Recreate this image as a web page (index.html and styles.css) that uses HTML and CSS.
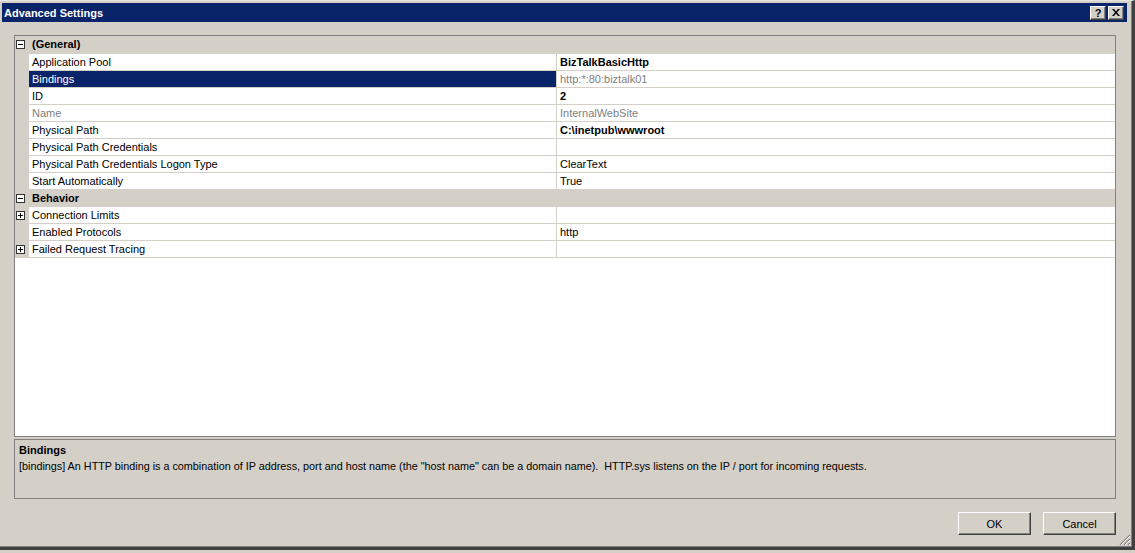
FILE: index.html
```html
<!DOCTYPE html>
<html lang="en">
<head>
  <meta charset="UTF-8">
  <title>Advanced Settings</title>
  <link rel="stylesheet" href="styles.css">
</head>
<body>
  <div class="window">
    <div class="titlebar">
      <span class="title">Advanced Settings</span>
      <div class="caption-buttons">
        <span class="cap-btn">?</span>
        <span class="cap-btn close">
          <svg width="8" height="7" viewBox="0 0 8 7"><path d="M0 0h2l2 2.5 2-2.5h2l-3 3.5 3 3.5h-2l-2-2.5-2 2.5h-2l3-3.5z" fill="#000"/></svg>
        </span>
      </div>
    </div>

    <div class="main">
      <div class="grid">
        <div class="row category first">
          <div class="gutter"><svg class="toggle" width="9" height="9" viewBox="0 0 9 9"><rect x="0.5" y="0.5" width="8" height="8" fill="#fff" stroke="#333"/><path d="M2 4.5h5" stroke="#000"/></svg></div>
          <div class="cat-name">(General)</div>
        </div>
        <div class="row">
          <div class="gutter"></div>
          <div class="name">Application Pool</div>
          <div class="value bold">BizTalkBasicHttp</div>
        </div>
        <div class="row selected">
          <div class="gutter"></div>
          <div class="name">Bindings</div>
          <div class="value muted">http:*:80:biztalk01</div>
        </div>
        <div class="row">
          <div class="gutter"></div>
          <div class="name">ID</div>
          <div class="value bold">2</div>
        </div>
        <div class="row">
          <div class="gutter"></div>
          <div class="name muted">Name</div>
          <div class="value muted">InternalWebSite</div>
        </div>
        <div class="row">
          <div class="gutter"></div>
          <div class="name">Physical Path</div>
          <div class="value bold">C:\inetpub\wwwroot</div>
        </div>
        <div class="row">
          <div class="gutter"></div>
          <div class="name">Physical Path Credentials</div>
          <div class="value"></div>
        </div>
        <div class="row">
          <div class="gutter"></div>
          <div class="name">Physical Path Credentials Logon Type</div>
          <div class="value">ClearText</div>
        </div>
        <div class="row">
          <div class="gutter"></div>
          <div class="name">Start Automatically</div>
          <div class="value">True</div>
        </div>
        <div class="row category">
          <div class="gutter"><svg class="toggle" width="9" height="9" viewBox="0 0 9 9"><rect x="0.5" y="0.5" width="8" height="8" fill="#fff" stroke="#333"/><path d="M2 4.5h5" stroke="#000"/></svg></div>
          <div class="cat-name">Behavior</div>
        </div>
        <div class="row">
          <div class="gutter"><svg class="toggle" width="9" height="9" viewBox="0 0 9 9"><rect x="0.5" y="0.5" width="8" height="8" fill="#fff" stroke="#333"/><path d="M2 4.5h5M4.5 2v5" stroke="#000"/></svg></div>
          <div class="name">Connection Limits</div>
          <div class="value"></div>
        </div>
        <div class="row">
          <div class="gutter"></div>
          <div class="name">Enabled Protocols</div>
          <div class="value">http</div>
        </div>
        <div class="row">
          <div class="gutter"><svg class="toggle" width="9" height="9" viewBox="0 0 9 9"><rect x="0.5" y="0.5" width="8" height="8" fill="#fff" stroke="#333"/><path d="M2 4.5h5M4.5 2v5" stroke="#000"/></svg></div>
          <div class="name">Failed Request Tracing</div>
          <div class="value"></div>
        </div>
      </div>

      <div class="desc">
        <div class="desc-title">Bindings</div>
        <div class="desc-text">[bindings] An HTTP binding is a combination of IP address, port and host name (the "host name" can be a domain name).&nbsp; HTTP.sys listens on the IP / port for incoming requests.</div>
      </div>

      <div class="footer">
        <button class="btn">OK</button>
        <button class="btn">Cancel</button>
      </div>
    </div>

    <svg class="grip" width="12" height="12" viewBox="0 0 12 12">
      <path d="M11 1L1 11M11 5L5 11M11 9L9 11" stroke="#808080" stroke-width="1.2"/>
      <path d="M11 2L2 11M11 6L6 11M11 10L10 11" stroke="#fff" stroke-width="0.8"/>
    </svg>
  </div>
</body>
</html>
```

FILE: styles.css
```css
body {
  margin: 0;
  background: #d4d0c8;
  font-family: Tahoma, "Liberation Sans", Arial, sans-serif;
  font-size: 11px;
  color: #000;
}

.window {
  position: relative;
  width: 1135px;
  height: 550px;
  box-sizing: border-box;
  padding: 3px 0 0 2px;
  background: #d4d0c8;
  border-top: 1px solid #e8e6e0;
  border-right: 3px solid #404040;
  border-bottom: 3px solid #404040;
  box-shadow: inset -1px -1px 0 #808080;
}

.titlebar {
  display: flex;
  justify-content: space-between;
  align-items: center;
  height: 19px;
  margin-right: 5px;
  margin-top: -1px;
  padding: 0 3px 0 2px;
  background: #0a246a;
  color: #fff;
}

.title {
  font-weight: bold;
  font-size: 11px;
}

.caption-buttons {
  display: flex;
  gap: 2px;
}

.cap-btn {
  display: flex;
  align-items: center;
  justify-content: center;
  width: 14px;
  height: 12px;
  background: #d4d0c8;
  color: #000;
  font-weight: bold;
  font-size: 11px;
  border: 1px solid;
  border-color: #fff #404040 #404040 #fff;
  box-shadow: inset -1px -1px 0 #808080;
}

.main {
  padding: 13px 0 0 12px;
}

.grid {
  width: 1100px;
  height: 400px;
  border: 1px solid #808080;
  background: #fff;
}

.row {
  display: flex;
  height: 17px;
  line-height: 16px;
}

.row.first {
  height: 18px;
  line-height: 17px;
}

.gutter {
  width: 14px;
  flex: none;
  position: relative;
  background: #d4d0c8;
}

.toggle {
  position: absolute;
  left: 1px;
  top: 4px;
}

.name {
  width: 524px;
  flex: none;
  padding-left: 3px;
  border-right: 1px solid #d4d0c8;
  border-bottom: 1px solid #d4d0c8;
  white-space: nowrap;
}

.value {
  flex: 1;
  padding-left: 3px;
  border-bottom: 1px solid #d4d0c8;
  white-space: nowrap;
}

.category {
  background: #d4d0c8;
}

.cat-name {
  padding-left: 3px;
  font-weight: bold;
}

.bold {
  font-weight: bold;
}

.muted {
  color: #808080;
}

.selected .name {
  background: #0a246a;
  color: #fff;
}

.desc {
  width: 1096px;
  height: 55px;
  margin-top: 2px;
  padding: 3px 0 0 4px;
  border: 1px solid #808080;
  background: #d4d0c8;
}

.desc-title {
  font-weight: bold;
  line-height: 15px;
}

.desc-text {
  line-height: 16px;
  font-size: 10.8px;
}

.footer {
  display: flex;
  justify-content: flex-end;
  gap: 12px;
  width: 1102px;
  padding-top: 13px;
}

.btn {
  width: 73px;
  height: 23px;
  padding: 0;
  font-family: inherit;
  font-size: 11px;
  background: #d4d0c8;
  border: 1px solid;
  border-color: #fff #404040 #404040 #fff;
  box-shadow: inset -1px -1px 0 #808080;
}

.grip {
  position: absolute;
  right: 1px;
  bottom: 1px;
}
```
